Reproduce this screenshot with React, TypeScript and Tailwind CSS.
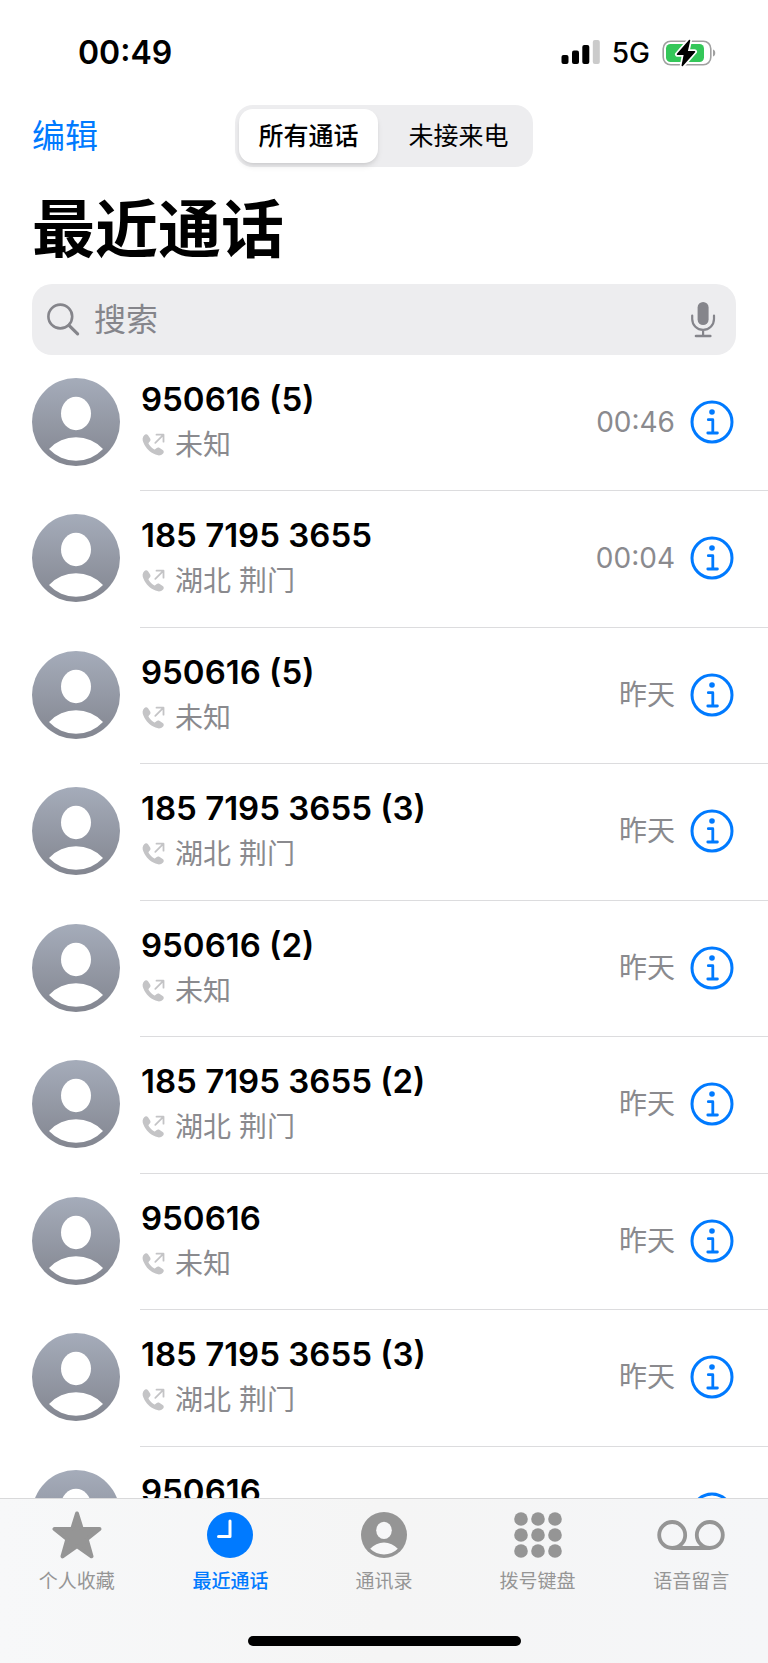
import { useState } from "react";
import { clsx } from "clsx";

interface Call {
  name: string;
  place: string;
  time: string;
}

const calls: Call[] = [
  { name: "950616 (5)", place: "未知", time: "00:46" },
  { name: "185 7195 3655", place: "湖北 荆门", time: "00:04" },
  { name: "950616 (5)", place: "未知", time: "昨天" },
  { name: "185 7195 3655 (3)", place: "湖北 荆门", time: "昨天" },
  { name: "950616 (2)", place: "未知", time: "昨天" },
  { name: "185 7195 3655 (2)", place: "湖北 荆门", time: "昨天" },
  { name: "950616", place: "未知", time: "昨天" },
  { name: "185 7195 3655 (3)", place: "湖北 荆门", time: "昨天" },
  { name: "950616", place: "未知", time: "昨天" },
];

const SignalIcon = () => (
  <svg width="39" height="25" viewBox="0 0 39 25" aria-hidden="true">
    <rect x="0.5" y="15" width="7" height="9" rx="2" />
    <rect x="11" y="10.5" width="7" height="13.5" rx="2" />
    <rect x="21.3" y="5" width="7" height="19" rx="2" />
    <rect x="31.8" y="0" width="7" height="24" rx="2" fill="#cbcbcb" />
  </svg>
);

const BatteryIcon = () => (
  <svg width="54" height="28" viewBox="0 0 54 28" aria-hidden="true">
    <rect x="1.2" y="2.2" width="47.6" height="23.6" rx="7.5" fill="none" stroke="#a0a0a0" strokeWidth="1.6" />
    <path d="M51 10.5c3 .8 3 6.2 0 7z" fill="#a0a0a0" />
    <rect x="4" y="5" width="38" height="18" rx="4.5" fill="#34c759" />
    <path
      d="M27.5 1.5 15.5 15.300h7L20.300 26.500 32.500 12.700h-7.500z"
      fill="#000"
      stroke="#fff"
      strokeWidth="5"
      strokeLinejoin="round"
      paintOrder="stroke"
    />
    <path d="M27.5 1.5 15.5 15.300h7L20.300 26.500 32.500 12.700h-7.500z" stroke="#000" strokeWidth="1.5" strokeLinejoin="round" />
  </svg>
);

const SearchIcon = () => (
  <svg width="34" height="34" viewBox="0 0 34 34" fill="none" stroke="#85858b" strokeLinecap="round" aria-hidden="true">
    <circle cx="14.300" cy="13.500" r="11.900" strokeWidth="2.600" />
    <path d="M23 22.300l8.600 8.600" strokeWidth="3.200" />
  </svg>
);

const MicIcon = () => (
  <svg width="26" height="36" viewBox="0 0 26 36" fill="none" stroke="#85858b" strokeLinecap="round" aria-hidden="true">
    <rect x="7.600" y="0" width="11" height="23" rx="5.500" fill="#85858b" stroke="none" />
    <path d="M2.200 13.500v3.500a10.900 10.900 0 0 0 21.800 0v-3.500M13.100 28.500V34" strokeWidth="2.200" />
    <path d="M6 34h14.300" strokeWidth="2.600" />
  </svg>
);

const Avatar = () => (
  <svg width="88" height="88" viewBox="0 0 88 88" className="shrink-0" aria-hidden="true">
    <defs>
      <linearGradient id="avatar" x1="0" y1="0" x2="0" y2="1">
        <stop offset="0" stopColor="#a5acba" />
        <stop offset="1" stopColor="#838690" />
      </linearGradient>
    </defs>
    <circle cx="44" cy="44" r="44" fill="url(#avatar)" />
    <ellipse cx="44" cy="35.500" rx="15" ry="16.700" fill="#fff" />
    <path d="M17 71a37 37 0 0 1 54 0a37 37 0 0 1-54 0z" fill="#fff" />
  </svg>
);

const OutgoingIcon = () => (
  <svg width="24" height="24" viewBox="0 0 24 24" aria-hidden="true">
    <path
      d="M3.200 2.200C4.400.9 6 .9 7 2.300l2 3c.8 1.300.7 2.300-.2 3.300l-.9.900c-.5.5-.5 1-.2 1.500 1.300 2 3.300 4 5.300 5.300.5.300 1 .300 1.500-.2l.9-.9c1-.9 2-1.100 3.300-.3l3 2c1.400 1 1.400 2.600.1 3.900-1.800 1.800-4.300 2.100-7.300.8C8.500 19 5 15.500 2.400 9.500 1.100 6.500 1.400 4 3.200 2.200z"
      fill="#c4c4c6"
    />
    <path
      d="M14.300 9.800l8-8M15.500 1.700h7v7"
      fill="none"
      stroke="#c4c4c6"
      strokeWidth="1.800"
      strokeLinecap="round"
      strokeLinejoin="round"
    />
  </svg>
);

const InfoIcon = () => (
  <svg width="44" height="44" viewBox="0 0 44 44" fill="none" stroke="#007aff" aria-hidden="true">
    <circle cx="22" cy="22" r="20" strokeWidth="3" />
    <circle cx="22" cy="12" r="2.800" fill="#007aff" stroke="none" />
    <path d="M18.300 19.700h4.500V33M17.800 33h9.600" strokeWidth="2.800" strokeLinecap="round" strokeLinejoin="round" />
  </svg>
);

const StarIcon = () => (
  <svg width="50" height="50" viewBox="0 0 50 50" aria-hidden="true">
    <path
      d="M25 3.500l4.800 15.500H47.500L34.700 29.300 39.500 46.300 25 36 10.500 46.300l4.800-17L2.500 19h17.700z"
      fill="currentColor"
      stroke="currentColor"
      strokeWidth="4"
      strokeLinejoin="round"
    />
  </svg>
);

const ClockIcon = () => (
  <svg width="46" height="46" viewBox="0 0 46 46" aria-hidden="true">
    <circle cx="23" cy="23" r="23" fill="currentColor" />
    <path d="M23 9v15.500H11.500" fill="none" stroke="#fff" strokeWidth="3" strokeLinecap="round" strokeLinejoin="round" />
  </svg>
);

const ContactIcon = () => (
  <svg width="46" height="46" viewBox="0 0 46 46" aria-hidden="true">
    <circle cx="23" cy="23" r="23" fill="currentColor" />
    <ellipse cx="23" cy="18.300" rx="7.800" ry="8.600" fill="#f7f7f8" />
    <path d="M9.200 36.800a18.500 18.500 0 0 1 27.600 0a19.500 19.500 0 0 1-27.600 0z" fill="#f7f7f8" />
  </svg>
);

const KeypadIcon = () => (
  <svg width="48" height="46" viewBox="0 0 48 46" fill="currentColor" aria-hidden="true">
    {[7, 23, 39].map((y) => [7, 24, 41].map((x) => <circle key={`${x}-${y}`} cx={x} cy={y} r="6.800" />))}
  </svg>
);

const VoicemailIcon = () => (
  <svg width="68" height="46" viewBox="0 0 68 46" fill="none" stroke="currentColor" strokeWidth="3.800" aria-hidden="true">
    <circle cx="15.200" cy="23" r="13" />
    <circle cx="52.800" cy="23" r="13" />
    <path d="M15 36h38" />
  </svg>
);

const tabs = [
  { title: "个人收藏", icon: StarIcon },
  { title: "最近通话", icon: ClockIcon },
  { title: "通讯录", icon: ContactIcon },
  { title: "拨号键盘", icon: KeypadIcon },
  { title: "语音留言", icon: VoicemailIcon },
];

const CallRow = ({ call }: { call: Call }) => {
  return (
    <li className="flex h-[136px] shrink-0 pl-8 even:h-[137px]">
      <div className="pt-[23px]">
        <Avatar />
      </div>
      <div className="ml-5 flex flex-1 border-b border-[#dcdcde] pr-[34px] pl-px">
        <div className="flex-1 pt-6">
          <p className="text-[33px] leading-10 font-semibold text-black">{call.name}</p>
          <p className="mt-[6px] flex items-center gap-[10px] text-[28px] leading-10 text-[#8a8a8e]">
            <OutgoingIcon />
            {call.place}
          </p>
        </div>
        <div className="flex h-[134px] items-center gap-[15px]">
          <span className="text-[28px] text-[#8a8a8e]">{call.time}</span>
          <button type="button" aria-label="详细信息">
            <InfoIcon />
          </button>
        </div>
      </div>
    </li>
  );
};

export default function App() {
  const [filter, setFilter] = useState("所有通话");
  const [activeTab, setActiveTab] = useState("最近通话");

  return (
    <div className="flex h-screen flex-col bg-white font-['Inter','Noto_Sans_CJK_SC',sans-serif]">
      {/* Status bar */}
      <div className="flex h-[105px] shrink-0 items-center justify-between pr-[52px] pl-[78px]">
        <span className="text-[32px] font-semibold">00:49</span>
        <div className="flex items-center gap-3">
          <SignalIcon />
          <span className="text-[28px] font-medium">5G</span>
          <BatteryIcon />
        </div>
      </div>

      <header className="shrink-0 px-8">
        <div className="grid grid-cols-[1fr_auto_1fr] items-center">
          <button type="button" className="justify-self-start pt-px text-[33px] text-[#007aff]">
            编辑
          </button>
          <div className="flex h-[62px] gap-[6px] rounded-[18px] bg-[#ededef] py-1 pl-1">
            {["所有通话", "未接来电"].map((title) => (
              <button
                key={title}
                type="button"
                aria-pressed={filter === title}
                onClick={() => setFilter(title)}
                className={clsx(
                  "rounded-[14px] pt-[2px] text-[25px]",
                  filter === title ? "w-[139px] bg-white font-medium shadow-md" : "w-[149px]"
                )}
              >
                {title}
              </button>
            ))}
          </div>
        </div>

        <h1 className="pt-6 pb-4 text-[63px] leading-[77px] font-bold">最近通话</h1>

        <div className="flex h-[71px] items-center gap-[14px] rounded-[20px] bg-[#ededef] px-[14px]">
          <SearchIcon />
          <input
            type="search"
            aria-label="搜索"
            placeholder="搜索"
            className="min-w-0 flex-1 bg-transparent text-[32px] outline-none placeholder:text-[#85858b]"
          />
          <button type="button" aria-label="语音输入" className="pr-[6px]">
            <MicIcon />
          </button>
        </div>
      </header>

      {/* Recent calls */}
      <ul className="flex min-h-0 flex-1 flex-col overflow-y-auto [scrollbar-width:none]">
        {calls.map((call, index) => (
          <CallRow key={index} call={call} />
        ))}
      </ul>

      {/* Tab bar */}
      <footer className="shrink-0 border-t border-[#d9d9da] bg-linear-to-r from-[#f7f8f9] via-[#f5f5f5] to-[#f5f6f8]">
        <nav className="grid grid-cols-5 pt-[11px]">
          {tabs.map(({ title, icon: Icon }) => (
            <button
              key={title}
              type="button"
              onClick={() => setActiveTab(title)}
              className={clsx(
                "flex flex-col items-center gap-[10px]",
                activeTab === title ? "font-medium text-[#007aff]" : "text-[#959595]"
              )}
            >
              <span className="flex h-[50px] items-center">
                <Icon />
              </span>
              <span className="text-[19px] leading-6">{title}</span>
            </button>
          ))}
        </nav>
        <div className="mx-auto mt-[42px] mb-[17px] h-[10px] w-[273px] rounded-full bg-black" />
      </footer>
    </div>
  );
}
